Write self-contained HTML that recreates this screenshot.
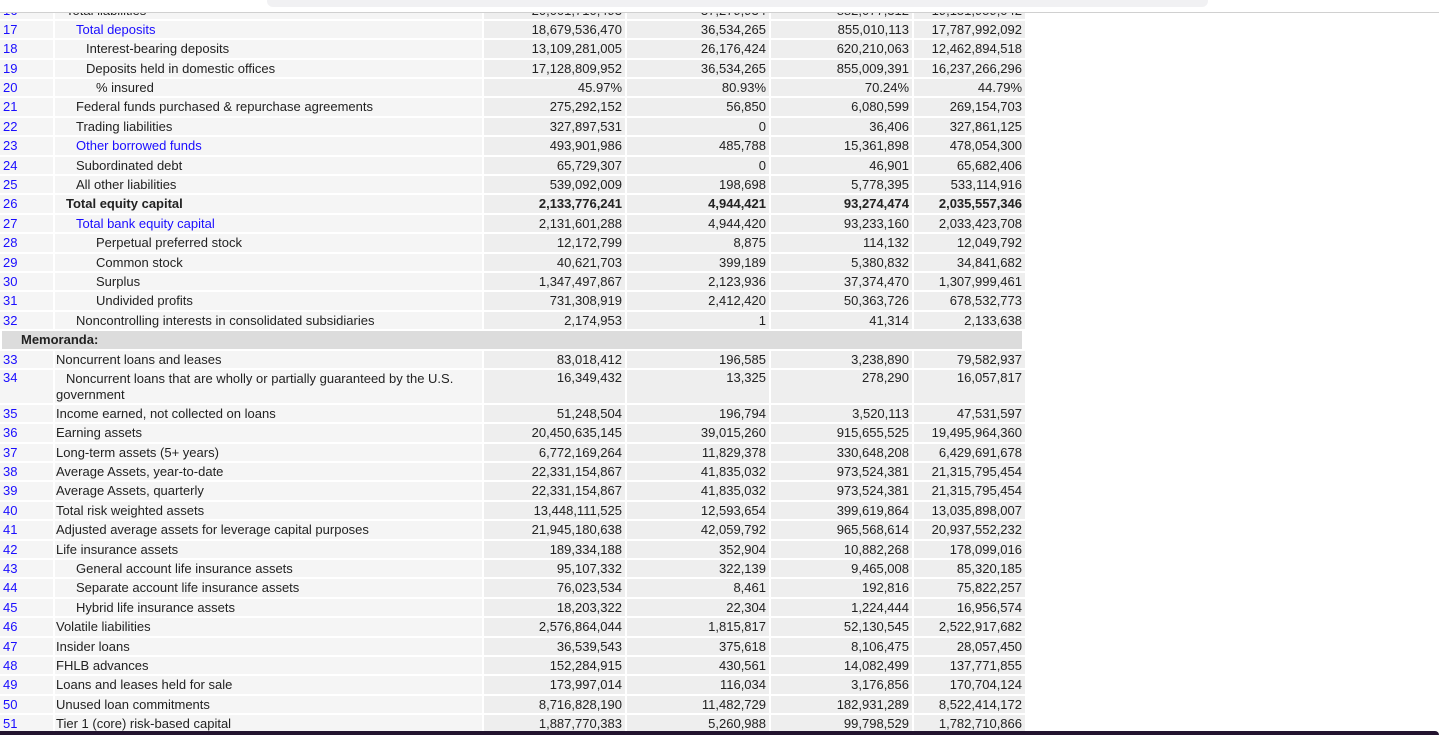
<!DOCTYPE html>
<html><head><meta charset="utf-8"><style>
body{margin:0;width:1439px;height:735px;overflow:hidden;background:#fff;font-family:"Liberation Sans",Arial,sans-serif;font-size:13px;color:#222;position:relative}
#hdr{position:absolute;left:0;top:0;width:1439px;height:12px;background:#fff;border-bottom:1px solid #d0d0d0;z-index:5}
#hdr div{position:absolute;left:267px;top:0;width:941px;height:7px;background:#f1f1f3;border-radius:0 0 6px 6px}
#tbl{position:absolute;left:0;top:1.5px;width:1023px}
.r{display:flex;height:17.4px;margin-bottom:2px;line-height:17.4px}
.r>div{flex:none;margin-right:2px;white-space:nowrap;overflow:hidden;box-sizing:border-box}
.n{width:53px;background:#f5f5f5;color:#1a0dff;padding-left:3px}
.l{width:427px;background:#f5f5f5}
.v{background:#eeeeee;text-align:right;padding-right:3px}
.a{width:141px}.b{width:142px}.c{width:141px}.d{width:111px;margin-right:0!important}
.i0{padding-left:1px}.i1{padding-left:21px}.i2{padding-left:31px}.i3{padding-left:41px}.ib{padding-left:11px}
.lk{color:#1a0dff}
.bd .l,.bd .v{font-weight:bold}
.m{background:#dcdcdc;height:17.4px;margin-bottom:2px;margin-left:2px;width:1020px;line-height:17.4px;font-weight:bold;padding-left:19px;box-sizing:border-box}
.tall{height:33px;line-height:16px}
.tall>div{white-space:normal}
#bot{position:absolute;left:0;top:731px;width:1439px;height:4px;background:#23142f;border-top-right-radius:4px}
</style></head><body>
<div id="hdr"><div></div></div>
<div id="tbl">
<div class="r"><div class="n">16</div><div class="l ib">Total liabilities</div><div class="v a">20,001,710,493</div><div class="v b">37,279,934</div><div class="v c">882,077,312</div><div class="v d">19,151,959,042</div></div>
<div class="r"><div class="n">17</div><div class="l i1 lk">Total deposits</div><div class="v a">18,679,536,470</div><div class="v b">36,534,265</div><div class="v c">855,010,113</div><div class="v d">17,787,992,092</div></div>
<div class="r"><div class="n">18</div><div class="l i2">Interest-bearing deposits</div><div class="v a">13,109,281,005</div><div class="v b">26,176,424</div><div class="v c">620,210,063</div><div class="v d">12,462,894,518</div></div>
<div class="r"><div class="n">19</div><div class="l i2">Deposits held in domestic offices</div><div class="v a">17,128,809,952</div><div class="v b">36,534,265</div><div class="v c">855,009,391</div><div class="v d">16,237,266,296</div></div>
<div class="r"><div class="n">20</div><div class="l i3">% insured</div><div class="v a">45.97%</div><div class="v b">80.93%</div><div class="v c">70.24%</div><div class="v d">44.79%</div></div>
<div class="r"><div class="n">21</div><div class="l i1">Federal funds purchased &amp; repurchase agreements</div><div class="v a">275,292,152</div><div class="v b">56,850</div><div class="v c">6,080,599</div><div class="v d">269,154,703</div></div>
<div class="r"><div class="n">22</div><div class="l i1">Trading liabilities</div><div class="v a">327,897,531</div><div class="v b">0</div><div class="v c">36,406</div><div class="v d">327,861,125</div></div>
<div class="r"><div class="n">23</div><div class="l i1 lk">Other borrowed funds</div><div class="v a">493,901,986</div><div class="v b">485,788</div><div class="v c">15,361,898</div><div class="v d">478,054,300</div></div>
<div class="r"><div class="n">24</div><div class="l i1">Subordinated debt</div><div class="v a">65,729,307</div><div class="v b">0</div><div class="v c">46,901</div><div class="v d">65,682,406</div></div>
<div class="r"><div class="n">25</div><div class="l i1">All other liabilities</div><div class="v a">539,092,009</div><div class="v b">198,698</div><div class="v c">5,778,395</div><div class="v d">533,114,916</div></div>
<div class="r bd"><div class="n">26</div><div class="l ib">Total equity capital</div><div class="v a">2,133,776,241</div><div class="v b">4,944,421</div><div class="v c">93,274,474</div><div class="v d">2,035,557,346</div></div>
<div class="r"><div class="n">27</div><div class="l i1 lk">Total bank equity capital</div><div class="v a">2,131,601,288</div><div class="v b">4,944,420</div><div class="v c">93,233,160</div><div class="v d">2,033,423,708</div></div>
<div class="r"><div class="n">28</div><div class="l i3">Perpetual preferred stock</div><div class="v a">12,172,799</div><div class="v b">8,875</div><div class="v c">114,132</div><div class="v d">12,049,792</div></div>
<div class="r"><div class="n">29</div><div class="l i3">Common stock</div><div class="v a">40,621,703</div><div class="v b">399,189</div><div class="v c">5,380,832</div><div class="v d">34,841,682</div></div>
<div class="r"><div class="n">30</div><div class="l i3">Surplus</div><div class="v a">1,347,497,867</div><div class="v b">2,123,936</div><div class="v c">37,374,470</div><div class="v d">1,307,999,461</div></div>
<div class="r"><div class="n">31</div><div class="l i3">Undivided profits</div><div class="v a">731,308,919</div><div class="v b">2,412,420</div><div class="v c">50,363,726</div><div class="v d">678,532,773</div></div>
<div class="r"><div class="n">32</div><div class="l i1">Noncontrolling interests in consolidated subsidiaries</div><div class="v a">2,174,953</div><div class="v b">1</div><div class="v c">41,314</div><div class="v d">2,133,638</div></div>
<div class="m">Memoranda:</div>
<div class="r"><div class="n">33</div><div class="l i0">Noncurrent loans and leases</div><div class="v a">83,018,412</div><div class="v b">196,585</div><div class="v c">3,238,890</div><div class="v d">79,582,937</div></div>
<div class="r tall"><div class="n">34</div><div class="l i0" style="text-indent:10px;padding-top:1px">Noncurrent loans that are wholly or partially guaranteed by the U.S. government</div><div class="v a">16,349,432</div><div class="v b">13,325</div><div class="v c">278,290</div><div class="v d">16,057,817</div></div>
<div class="r"><div class="n">35</div><div class="l i0">Income earned, not collected on loans</div><div class="v a">51,248,504</div><div class="v b">196,794</div><div class="v c">3,520,113</div><div class="v d">47,531,597</div></div>
<div class="r"><div class="n">36</div><div class="l i0">Earning assets</div><div class="v a">20,450,635,145</div><div class="v b">39,015,260</div><div class="v c">915,655,525</div><div class="v d">19,495,964,360</div></div>
<div class="r"><div class="n">37</div><div class="l i0">Long-term assets (5+ years)</div><div class="v a">6,772,169,264</div><div class="v b">11,829,378</div><div class="v c">330,648,208</div><div class="v d">6,429,691,678</div></div>
<div class="r"><div class="n">38</div><div class="l i0">Average Assets, year-to-date</div><div class="v a">22,331,154,867</div><div class="v b">41,835,032</div><div class="v c">973,524,381</div><div class="v d">21,315,795,454</div></div>
<div class="r"><div class="n">39</div><div class="l i0">Average Assets, quarterly</div><div class="v a">22,331,154,867</div><div class="v b">41,835,032</div><div class="v c">973,524,381</div><div class="v d">21,315,795,454</div></div>
<div class="r"><div class="n">40</div><div class="l i0">Total risk weighted assets</div><div class="v a">13,448,111,525</div><div class="v b">12,593,654</div><div class="v c">399,619,864</div><div class="v d">13,035,898,007</div></div>
<div class="r"><div class="n">41</div><div class="l i0">Adjusted average assets for leverage capital purposes</div><div class="v a">21,945,180,638</div><div class="v b">42,059,792</div><div class="v c">965,568,614</div><div class="v d">20,937,552,232</div></div>
<div class="r"><div class="n">42</div><div class="l i0">Life insurance assets</div><div class="v a">189,334,188</div><div class="v b">352,904</div><div class="v c">10,882,268</div><div class="v d">178,099,016</div></div>
<div class="r"><div class="n">43</div><div class="l i1">General account life insurance assets</div><div class="v a">95,107,332</div><div class="v b">322,139</div><div class="v c">9,465,008</div><div class="v d">85,320,185</div></div>
<div class="r"><div class="n">44</div><div class="l i1">Separate account life insurance assets</div><div class="v a">76,023,534</div><div class="v b">8,461</div><div class="v c">192,816</div><div class="v d">75,822,257</div></div>
<div class="r"><div class="n">45</div><div class="l i1">Hybrid life insurance assets</div><div class="v a">18,203,322</div><div class="v b">22,304</div><div class="v c">1,224,444</div><div class="v d">16,956,574</div></div>
<div class="r"><div class="n">46</div><div class="l i0">Volatile liabilities</div><div class="v a">2,576,864,044</div><div class="v b">1,815,817</div><div class="v c">52,130,545</div><div class="v d">2,522,917,682</div></div>
<div class="r"><div class="n">47</div><div class="l i0">Insider loans</div><div class="v a">36,539,543</div><div class="v b">375,618</div><div class="v c">8,106,475</div><div class="v d">28,057,450</div></div>
<div class="r"><div class="n">48</div><div class="l i0">FHLB advances</div><div class="v a">152,284,915</div><div class="v b">430,561</div><div class="v c">14,082,499</div><div class="v d">137,771,855</div></div>
<div class="r"><div class="n">49</div><div class="l i0">Loans and leases held for sale</div><div class="v a">173,997,014</div><div class="v b">116,034</div><div class="v c">3,176,856</div><div class="v d">170,704,124</div></div>
<div class="r"><div class="n">50</div><div class="l i0">Unused loan commitments</div><div class="v a">8,716,828,190</div><div class="v b">11,482,729</div><div class="v c">182,931,289</div><div class="v d">8,522,414,172</div></div>
<div class="r"><div class="n">51</div><div class="l i0">Tier 1 (core) risk-based capital</div><div class="v a">1,887,770,383</div><div class="v b">5,260,988</div><div class="v c">99,798,529</div><div class="v d">1,782,710,866</div></div>
</div>
<div id="bot"></div>
</body></html>
